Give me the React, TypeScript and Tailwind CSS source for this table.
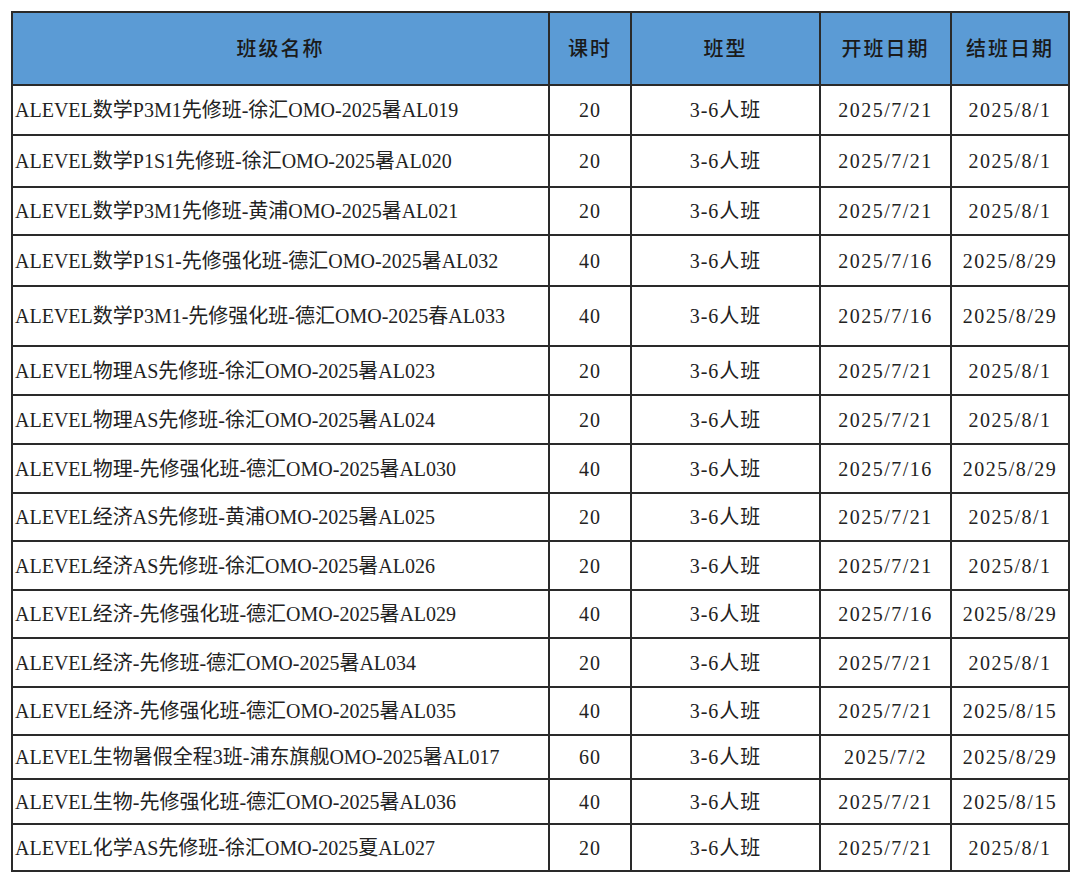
const rows: { name: string; hours: string; type: string; start: string; end: string; h: string }[] = [
  { name: "ALEVEL数学P3M1先修班-徐汇OMO-2025暑AL019", hours: "20", type: "3-6人班", start: "2025/7/21", end: "2025/8/1", h: "h-[50px]" },
  { name: "ALEVEL数学P1S1先修班-徐汇OMO-2025暑AL020", hours: "20", type: "3-6人班", start: "2025/7/21", end: "2025/8/1", h: "h-[52px]" },
  { name: "ALEVEL数学P3M1先修班-黄浦OMO-2025暑AL021", hours: "20", type: "3-6人班", start: "2025/7/21", end: "2025/8/1", h: "h-[48px]" },
  { name: "ALEVEL数学P1S1-先修强化班-德汇OMO-2025暑AL032", hours: "40", type: "3-6人班", start: "2025/7/16", end: "2025/8/29", h: "h-[51px]" },
  { name: "ALEVEL数学P3M1-先修强化班-德汇OMO-2025春AL033", hours: "40", type: "3-6人班", start: "2025/7/16", end: "2025/8/29", h: "h-[60px]" },
  { name: "ALEVEL物理AS先修班-徐汇OMO-2025暑AL023", hours: "20", type: "3-6人班", start: "2025/7/21", end: "2025/8/1", h: "h-[49px]" },
  { name: "ALEVEL物理AS先修班-徐汇OMO-2025暑AL024", hours: "20", type: "3-6人班", start: "2025/7/21", end: "2025/8/1", h: "h-[49px]" },
  { name: "ALEVEL物理-先修强化班-德汇OMO-2025暑AL030", hours: "40", type: "3-6人班", start: "2025/7/16", end: "2025/8/29", h: "h-[49px]" },
  { name: "ALEVEL经济AS先修班-黄浦OMO-2025暑AL025", hours: "20", type: "3-6人班", start: "2025/7/21", end: "2025/8/1", h: "h-[48px]" },
  { name: "ALEVEL经济AS先修班-徐汇OMO-2025暑AL026", hours: "20", type: "3-6人班", start: "2025/7/21", end: "2025/8/1", h: "h-[49px]" },
  { name: "ALEVEL经济-先修强化班-德汇OMO-2025暑AL029", hours: "40", type: "3-6人班", start: "2025/7/16", end: "2025/8/29", h: "h-[48px]" },
  { name: "ALEVEL经济-先修班-德汇OMO-2025暑AL034", hours: "20", type: "3-6人班", start: "2025/7/21", end: "2025/8/1", h: "h-[49px]" },
  { name: "ALEVEL经济-先修强化班-德汇OMO-2025暑AL035", hours: "40", type: "3-6人班", start: "2025/7/21", end: "2025/8/15", h: "h-[48px]" },
  { name: "ALEVEL生物暑假全程3班-浦东旗舰OMO-2025暑AL017", hours: "60", type: "3-6人班", start: "2025/7/2", end: "2025/8/29", h: "h-[44px]" },
  { name: "ALEVEL生物-先修强化班-德汇OMO-2025暑AL036", hours: "40", type: "3-6人班", start: "2025/7/21", end: "2025/8/15", h: "h-[45px]" },
  { name: "ALEVEL化学AS先修班-徐汇OMO-2025夏AL027", hours: "20", type: "3-6人班", start: "2025/7/21", end: "2025/8/1", h: "h-[47px]" },
];

const headers = ["班级名称", "课时", "班型", "开班日期", "结班日期"];

export default function App() {
  return (
    <div className="min-h-[882px] bg-white pt-[11px] pl-[11px] font-['Liberation_Serif','Noto_Sans_CJK_SC',serif] text-[20px] text-[#222]">
      <table className="table-fixed border-collapse border-2 border-[#2a2a2a] w-[1057px]">
        <colgroup>
          <col className="w-[537px]" />
          <col className="w-[82px]" />
          <col className="w-[189px]" />
          <col className="w-[131px]" />
          <col className="w-[118px]" />
        </colgroup>
        <thead>
          <tr className="h-[73px] bg-[#5b9bd5]">
            {headers.map((h) => (
              <th key={h} className="border-2 border-[#2a2a2a] p-0 text-center font-medium tracking-[2px] text-[#1a1a1a]">
                {h}
              </th>
            ))}
          </tr>
        </thead>
        <tbody>
          {rows.map((r, i) => (
            <tr key={i} className={r.h}>
              <td className="border-2 border-[#2a2a2a] px-[2px] py-0 text-left whitespace-nowrap">{r.name}</td>
              <td className="border-2 border-[#2a2a2a] p-0 text-center tracking-[1px]">{r.hours}</td>
              <td className="border-2 border-[#2a2a2a] p-0 text-center tracking-[1px]">{r.type}</td>
              <td className="border-2 border-[#2a2a2a] p-0 text-center tracking-[1.5px]">{r.start}</td>
              <td className="border-2 border-[#2a2a2a] p-0 text-center tracking-[1.5px]">{r.end}</td>
            </tr>
          ))}
        </tbody>
      </table>
    </div>
  );
}
